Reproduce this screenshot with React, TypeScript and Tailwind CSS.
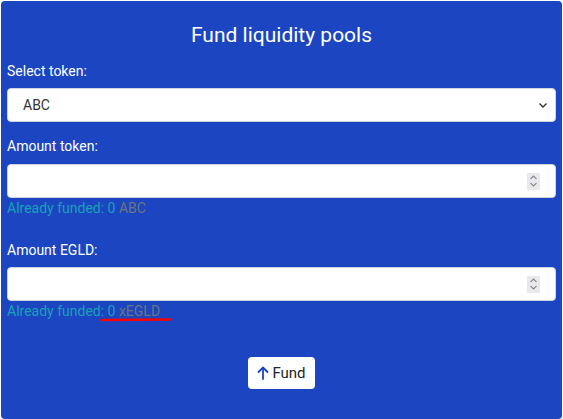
import React from "react";

const Spinner = () => (
  <div className="flex h-[17px] w-[13px] flex-col items-center justify-center bg-[#e9e9ed]">
    <svg width="9" height="14" viewBox="0 0 9 14" fill="none" stroke="#8a8a8f" strokeWidth="1.1">
      <path d="M1.5 5 L4.5 2 L7.5 5" />
      <path d="M1.5 9 L4.5 12 L7.5 9" />
    </svg>
  </div>
);

const NumberBox = () => (
  <div className="flex h-[34px] items-center justify-end rounded-[4px] border border-[#ced4da] bg-white pr-[15px]">
    <Spinner />
  </div>
);

export default function App() {
  return (
    <div className="h-[419px] w-[563px] bg-white p-px" style={{ fontFamily: "Roboto, 'Liberation Sans', sans-serif" }}>
      <div className="flex h-[418px] flex-col rounded-[4px] bg-[#1c45c1] px-[6px] pt-[20px] text-[14px] leading-[20px] text-white">
        <h1 className="text-center text-[21px] leading-[28px]">Fund liquidity pools</h1>

        <label className="mt-[12px]">Select token:</label>
        <div className="mt-[7px] flex h-[34px] items-center justify-between rounded-[4px] border border-[#ced4da] bg-white pl-[15px] pr-[7px] text-[#333]">
          <span>ABC</span>
          <svg width="10" height="7" viewBox="0 0 10 7" fill="none" stroke="#333" strokeWidth="1.4">
            <path d="M1.5 1.5 L5 5 L8.5 1.5" />
          </svg>
        </div>

        <label className="mt-[14px]">Amount token:</label>
        <div className="mt-[8px]">
          <NumberBox />
        </div>
        <div className="text-[#17a2b8]">
          Already funded: 0 <span className="text-[#6c757d]">ABC</span>
        </div>

        <label className="mt-[22px]">Amount EGLD:</label>
        <div className="mt-[7px]">
          <NumberBox />
        </div>
        <div className="relative text-[#17a2b8]">
          Already funded: 0 <span className="text-[#6c757d]">xEGLD</span>
          <svg className="absolute left-[93px] top-[16px]" width="74" height="6" viewBox="0 0 74 6">
            <path d="M1.5 3 L70 2.5" stroke="#ff0000" strokeWidth="2.6" fill="none" strokeLinecap="round" />
          </svg>
        </div>

        <div className="mt-[36px] flex justify-center">
          <button className="flex h-[32px] w-[67px] items-center justify-center gap-[3px] rounded-[4px] bg-white text-[15px] text-[#212529]">
            <svg width="12" height="14" viewBox="0 0 12 14" fill="none" stroke="#1c45c1" strokeWidth="1.8" strokeLinecap="round" strokeLinejoin="round">
              <path d="M6 13 V2" />
              <path d="M1.5 6 L6 1.5 L10.5 6" />
            </svg>
            <span>Fund</span>
          </button>
        </div>
      </div>
    </div>
  );
}
